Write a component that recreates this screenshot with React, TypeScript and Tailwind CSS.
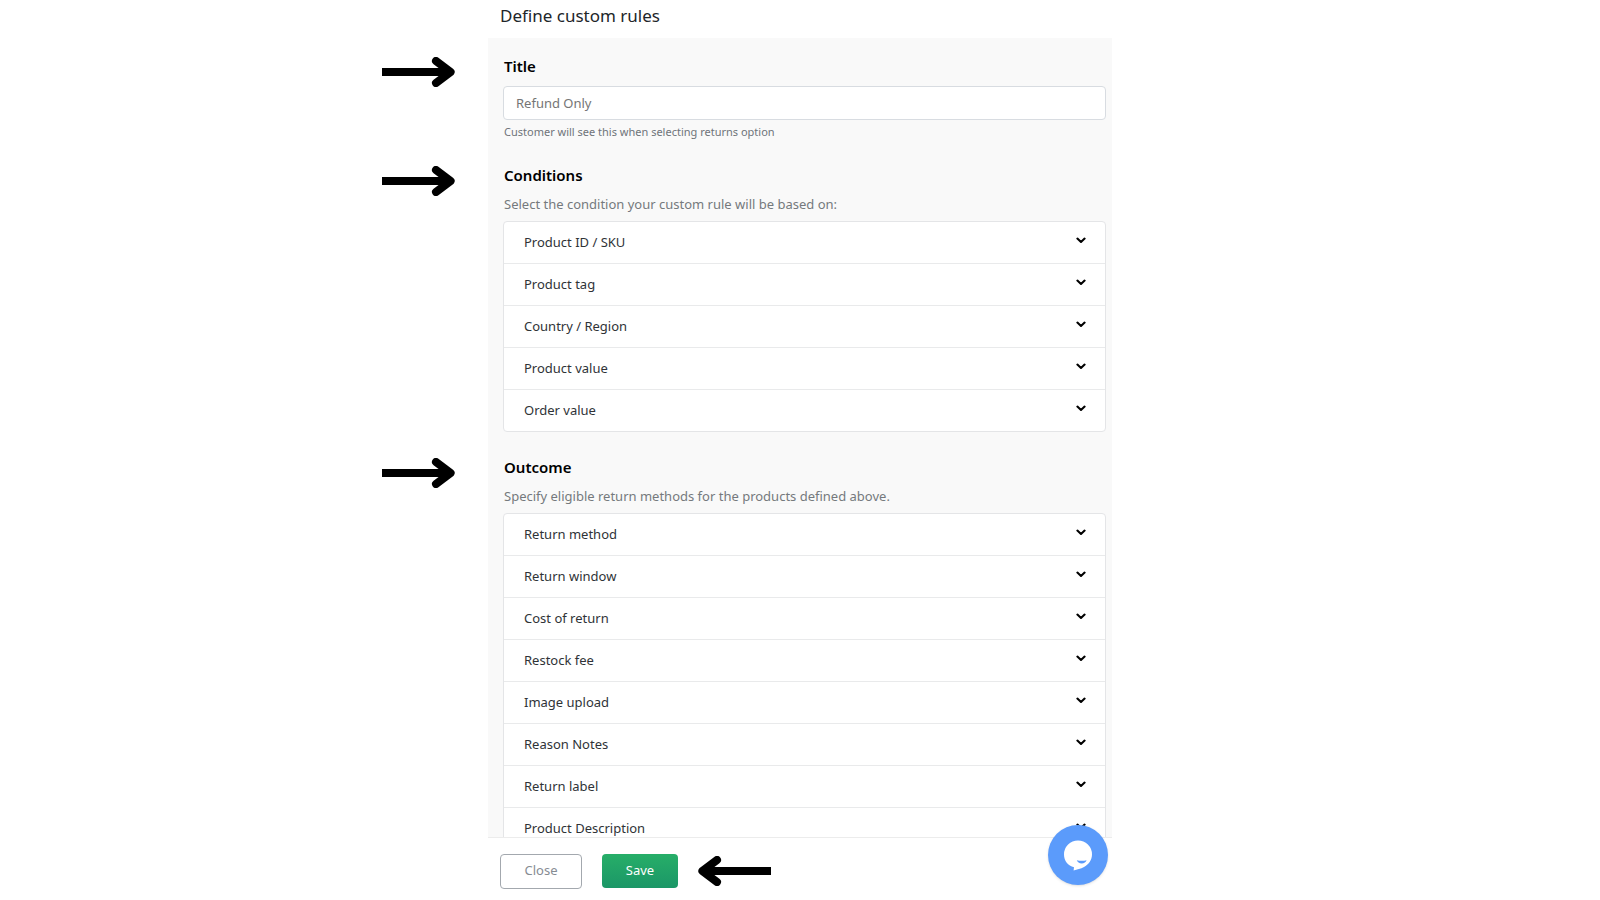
import { useState } from "react"
import type { ReactNode } from "react"

const conditions = ["Product ID / SKU", "Product tag", "Country / Region", "Product value", "Order value"]

const outcomes = [
  "Return method",
  "Return window",
  "Cost of return",
  "Restock fee",
  "Image upload",
  "Reason Notes",
  "Return label",
  "Product Description",
]

function Arrow({ className = "" }: { className?: string }) {
  return (
    <svg viewBox="0 0 73 30" className={`h-[30px] w-[73px] shrink-0 ${className}`} fill="none" aria-hidden="true">
      <path d="M0 15H64" stroke="#000" strokeWidth="7.8" />
      <path d="M54 4L68.6 15L54 26" stroke="#000" strokeWidth="8" strokeLinecap="round" strokeLinejoin="round" />
      <path d="M60 10L68 15L60 20Z" fill="#000" />
    </svg>
  )
}

function Chevron() {
  return (
    <svg viewBox="0 0 10 7" className="mb-1 h-[7px] w-[10px]" fill="none" aria-hidden="true">
      <path d="M1.4 1.6L5 4.9L8.6 1.6" stroke="#000" strokeWidth="2.1" strokeLinecap="round" strokeLinejoin="round" />
    </svg>
  )
}

function Section({ children, className = "" }: { children: ReactNode; className?: string }) {
  return (
    <section className="grid grid-cols-[1fr_minmax(0,624px)_1fr]">
      <div className={`flex justify-end pr-[33px] ${className}`}>
        <Arrow className="mt-[2px]" />
      </div>
      <div className={`bg-[#f9f9f9] pr-[6px] pl-4 ${className}`}>{children}</div>
    </section>
  )
}

function RuleList({ items }: { items: string[] }) {
  const [selected, setSelected] = useState("")

  return (
    <ul className="mt-[5px] -ml-px rounded border border-[#e4e5e7] bg-white">
      {items.map((item) => (
        <li key={item} className="border-b border-[#e9eaeb] last:border-b-0">
          <button
            type="button"
            aria-expanded={selected === item}
            onClick={() => setSelected(selected === item ? "" : item)}
            className="flex h-[41px] w-full items-center justify-between pr-[19px] pl-5 text-left text-[13px] text-[#2f3337]"
          >
            {item}
            <Chevron />
          </button>
        </li>
      ))}
    </ul>
  )
}

export default function App() {
  return (
    <div className="flex h-screen flex-col overflow-hidden bg-white font-['Noto_Sans','Open_Sans',sans-serif] text-black">
      {/* Header */}
      <header className="mx-auto flex h-[38px] w-full max-w-[624px] shrink-0 items-center px-3 pb-[6px]">
        <h1 className="text-[17px] text-[#212529]">Define custom rules</h1>
      </header>

      {/* Rule form */}
      <main className="min-h-0 flex-1 overflow-hidden">
        <Section className="pt-[17px]">
          <label htmlFor="title" className="block text-[15px] leading-[22px] font-semibold">
            Title
          </label>
          <div className="mt-[9px] -ml-px">
            <input
              id="title"
              type="text"
              placeholder="Refund Only"
              className="block h-[34px] w-full rounded border border-[#d8dce1] bg-white px-3 text-[13px] placeholder:text-[#757575]"
            />
          </div>
          <p className="mt-1 text-[11px] leading-4 text-[#6f7479]">Customer will see this when selecting returns option</p>
        </Section>

        <Section className="pt-6">
          <h2 className="text-[15px] leading-[22px] font-semibold">Conditions</h2>
          <p className="mt-[6px] text-[13px] leading-6 text-[#75797d]">
            Select the condition your custom rule will be based on:
          </p>
          <RuleList items={conditions} />
        </Section>

        <Section className="pt-6">
          <h2 className="text-[15px] leading-[22px] font-semibold">Outcome</h2>
          <p className="mt-[6px] text-[13px] leading-6 text-[#75797d]">
            Specify eligible return methods for the products defined above.
          </p>
          <RuleList items={outcomes} />
        </Section>
      </main>

      {/* Footer */}
      <footer className="relative mx-auto flex h-[63px] w-full max-w-[624px] shrink-0 items-center border-t border-[#ececec] px-3 pt-1">
        <button
          type="button"
          className="h-[35px] w-[82px] rounded border border-[#a3a8ae] bg-white text-[13px] text-[#868c93]"
        >
          Close
        </button>
        <button
          type="button"
          className="ml-5 h-[34px] w-[76px] rounded bg-linear-to-b from-[#27ae68] to-[#1b9767] text-[13px] text-white"
        >
          Save
        </button>
        <Arrow className="ml-5 rotate-180" />

        {/* Chat */}
        <button
          type="button"
          aria-label="Chat"
          className="absolute right-1 bottom-[15px] h-[60px] w-[60px] rounded-full bg-[#5b9bfb] shadow-sm"
        >
          <svg viewBox="0 0 60 60" className="h-[60px] w-[60px]" aria-hidden="true">
            <path
              d="M30 15.500a14 14 0 0 1 14 14c0 5.500-3.500 10-8 12.500-3.200 1.700-7 2.700-10.400 3.400l.4-3.200C20 40.500 16 36 16 29.500a14 14 0 0 1 14-14z"
              fill="#fff"
            />
            <path d="M28.800 35.200c3.200.7 6.600.7 9.800 0 -.6 2-2.500 3.200-4.900 3.200s-4.300-1.200-4.900-3.200z" fill="#5b9bfb" />
          </svg>
        </button>
      </footer>
    </div>
  )
}
